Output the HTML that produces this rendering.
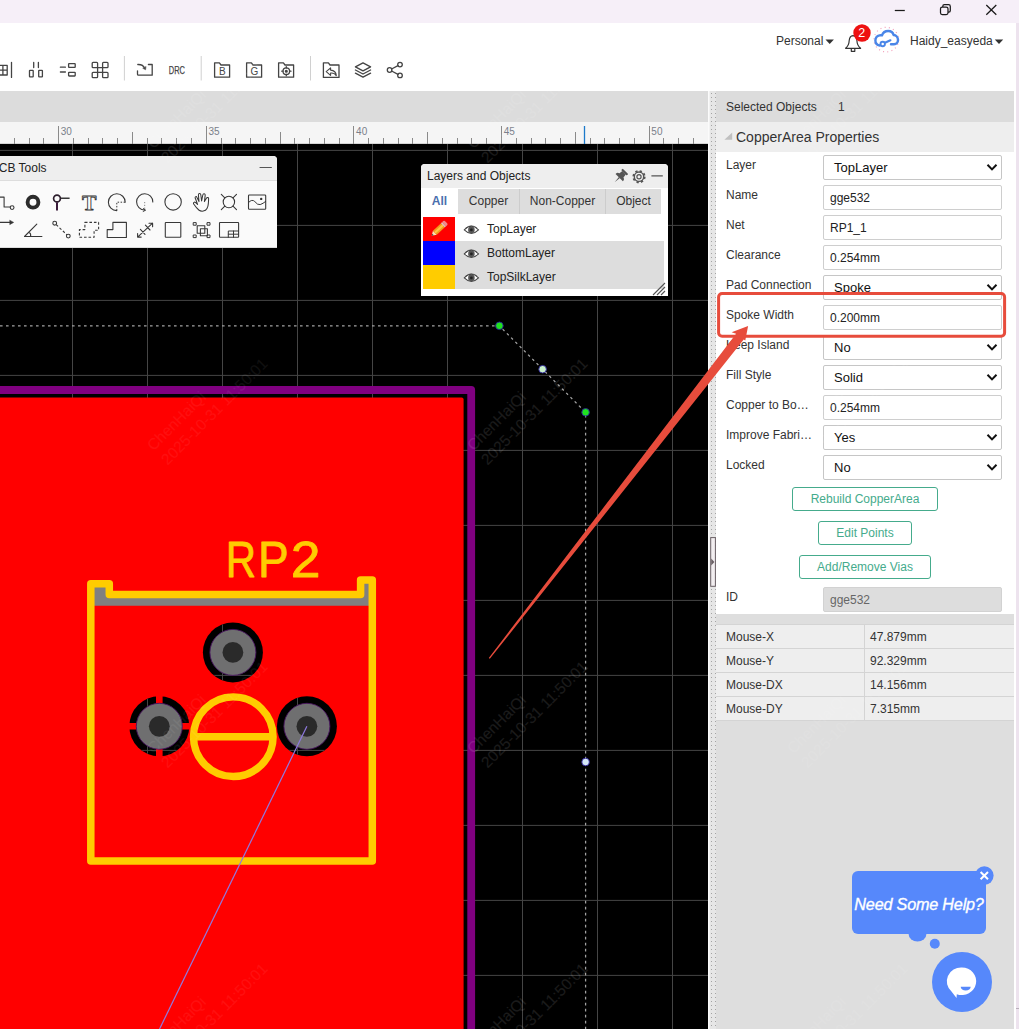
<!DOCTYPE html><html><head><meta charset="utf-8"><title>EasyEDA</title><style>
*{box-sizing:border-box;margin:0;padding:0}
html,body{width:1019px;height:1029px;overflow:hidden;background:#fff}
body{font-family:"Liberation Sans",Arial,sans-serif;font-size:12px;color:#333;position:relative}
.abs{position:absolute}
#titlebar{left:0;top:0;width:1019px;height:23px;background:#f6eff8}
#rightedge{left:1016px;top:23px;width:3px;height:1006px;background:#ede3ee}
#toolbar{left:0;top:23px;width:1016px;height:68px;background:#fff}
#tabbar{left:0;top:91px;width:708px;height:31px;background:#dcdcdc}
#ruler{left:0;top:122px;width:708px;height:22px;background:#f5f5f5;border-bottom:1px solid #d4d4d4}
#canvas{left:0;top:144px;width:708px;height:885px;background:#000;overflow:hidden}
#splitter{left:708px;top:91px;width:9px;height:938px;background:#e6e6e6}
#rpanel{left:716px;top:91px;width:298px;height:938px;background:#dedede}
.lbl{position:absolute;left:10px;white-space:nowrap;color:#333;font-size:12px;line-height:14px}
.inp{position:absolute;left:107px;width:179px;height:25px;border:1px solid #cecece;background:#fff;border-radius:2px;font-size:12px;line-height:24px;padding-left:6px;color:#222;white-space:nowrap}
.sel{font-size:13px;padding-left:10px;color:#111;border-color:#c6c6c6}
.btn{position:absolute;height:24px;border:1px solid #45ab8c;border-radius:3px;color:#45ab8c;font-size:12px;line-height:23px;text-align:center;background:#fff;white-space:nowrap}
.mrow{position:absolute;left:0;width:298px;height:24px;background:#eee;border-top:1px solid #d4d4d4;font-size:12px;line-height:24px;color:#333}
.mrow span{position:absolute;top:0}
.panel{position:absolute;background:#fff;overflow:hidden}
.tab{position:absolute;top:0;height:25px;background:#ddd;text-align:center;font-size:12px;line-height:25px;color:#333;border-right:1px solid #ccc}
.lrow{position:absolute;left:2px;height:24px;width:241px;font-size:12px;line-height:24px;color:#222}
</style></head><body>
<div id="titlebar" class="abs"><svg width="1019" height="23" viewBox="0 0 1019 23" style="position:absolute;left:0;top:0" fill="none" stroke="#1a1a1a" stroke-width="1.25"><path d="M894.8 10.5H904.8"/><rect x="940.5" y="7" width="7.5" height="7.5" rx="1.8"/><path d="M942.8 7V6.3Q942.8 4.7 944.4 4.7H948.6Q950.3 4.7 950.3 6.4V10.6Q950.3 12.2 948.8 12.2H948"/><path d="M986.3 5L996.3 14.8M996.3 5L986.3 14.8"/></svg></div>
<div id="rightedge" class="abs"><div class="abs" style="left:0;top:985px;width:3px;height:1px;background:#b9afbb"></div></div>
<div id="toolbar" class="abs">
<div class="abs" style="left:776px;top:11px;font-size:12px;line-height:14px;color:#333">Personal</div>
<div class="abs" style="left:910px;top:11px;font-size:12px;line-height:14px;color:#333">Haidy_easyeda</div>
<svg class="abs" style="left:0;top:0" width="1016" height="68" viewBox="0 23 1016 68">
<path d="M825.5 39.5h8.4l-4.2 4.4z" fill="#333"/><path d="M994.8 39.5h8.4l-4.2 4.4z" fill="#333"/>
<g fill="none" stroke="#333" stroke-width="1.2" stroke-linejoin="round"><path d="M845.6 48.3Q849 45.5 849.2 40.5Q849.6 35.8 853 35.6Q856.6 35.8 856.9 40.5Q857.1 45.5 860.6 48.3Z"/><path d="M851.3 48.5V51.3H854.8V48.5"/></g>
<circle cx="862" cy="33" r="8.700" fill="#ee1111"/><text x="861.7" y="37.4" font-size="12.5" fill="#fff" text-anchor="middle" font-family="Liberation Sans,Arial,sans-serif">2</text>
<circle cx="886.3" cy="39.600" r="12.300" fill="#fff" stroke="#f08aaa" stroke-width="1.200" stroke-dasharray="1 3.300" opacity="0.800"/>
<path d="M891 44.200H894C896.500 44.200 898 42.300 898 40C898 37.200 896 35.200 893.600 35C893 32.600 890.800 31 888.200 31C885.200 31 882.800 32.800 882 35.400C881 35.200 880.400 35.200 879.600 35.400C877 36 875.400 38 875.400 40.400C875.400 43 877.400 45 879.800 45.500" fill="none" stroke="#4a86e8" stroke-width="2.400" stroke-linecap="round" stroke-linejoin="round"/>
<path d="M884.400 43L890.400 40.300" stroke="#4a86e8" stroke-width="2.200" fill="none" stroke-linecap="round"/><circle cx="882.700" cy="44" r="2.200" fill="#fff" stroke="#4a86e8" stroke-width="1.900"/>
<g fill="none" stroke="#444" stroke-width="1.3" stroke-linejoin="round" stroke-linecap="round">
<path d="M-2 65.300H7.200V75H-2M2.900 65.300V75M-2 70.200H7.200M11.500 62.300V77.400"/>
<path d="M33.700 62.400V67.500M38.400 62.400V67.500"/><rect x="29.500" y="70.300" width="3.700" height="6.600" rx="0.500"/><rect x="38.700" y="70.300" width="3.700" height="6.600" rx="0.500"/>
<path d="M60.400 67.200H65.400M60.400 72H65.400"/><rect x="68.600" y="63.700" width="6.600" height="3.700" rx="0.500"/><rect x="68.600" y="72.300" width="6.600" height="3.700" rx="0.500"/>
<rect x="92.2" y="62.4" width="5.4" height="5.2" rx="0.9"/><rect x="102.6" y="62.4" width="5.4" height="5.200" rx="0.900"/><rect x="92.200" y="72.400" width="5.400" height="5.200" rx="0.900"/><rect x="102.600" y="72.400" width="5.400" height="5.200" rx="0.900"/><rect x="97.600" y="67.600" width="5" height="4.800"/>
<path d="M137.500 70.800V74.200Q137.500 75.200 138.500 75.200H152.200V64.500H148.400M137.800 64.500Q143.200 64.300 144.600 68.400"/><path d="M143 68.400L145.600 69.800L146 66.800Z" fill="#444" stroke-width="0.500"/>
<path d="M214.6 62.8H219.4L221 65H229.6V77.2H214.6Z"/>
<path d="M246.6 62.8H251.4L253 65H261.6V77.2H246.6Z"/>
<path d="M278.6 62.8H283.4L285 65H293.6V77.2H278.6Z"/><circle cx="286.3" cy="71.2" r="3.3"/><circle cx="286.3" cy="71.2" r="0.9" fill="#444"/><path d="M286.3 66.6V68M286.3 74.4V75.8M281.7 71.2H283M289.6 71.2H291"/>
<path d="M323.400 62.800H328.400L330 65H339V77.400H323.400Z"/><path d="M330.600 67.900L326.200 71.600L330.600 75.300V73.100Q334.600 72.800 336.300 75.600Q336 70.400 330.600 70.100Z" stroke-width="1.100"/>
<path d="M363 62.8L370.6 66.8L363 70.8L355.4 66.8Z"/><path d="M355.4 70L363 74L370.6 70M355.4 73.2L363 77.2L370.6 73.2"/>
<circle cx="389.6" cy="70" r="2.3"/><circle cx="400" cy="64.6" r="2.3"/><circle cx="400" cy="75.4" r="2.3"/><path d="M391.6 69L398 65.6M391.6 71L398 74.4"/>
</g>
<text x="222.4" y="75" font-size="10" fill="#444" text-anchor="middle" font-family="Liberation Sans,Arial,sans-serif">B</text>
<text x="254.4" y="75" font-size="10" fill="#444" text-anchor="middle" font-family="Liberation Sans,Arial,sans-serif">G</text>
<text x="168.800" y="73.900" font-size="11" fill="#444" stroke="#444" stroke-width="0.250" font-family="Liberation Sans,Arial,sans-serif" textLength="16.200" lengthAdjust="spacingAndGlyphs">DRC</text>
<path d="M124.4 56V80.5" stroke="#d0d0d0" stroke-width="1"/>
<path d="M201.2 56V80.5" stroke="#d0d0d0" stroke-width="1"/>
<path d="M310.5 56V80.5" stroke="#d0d0d0" stroke-width="1"/>
</svg></div>
<div id="tabbar" class="abs"></div>
<div id="ruler" class="abs"><svg width="708" height="22" viewBox="0 122 708 22" style="position:absolute;left:0;top:0">
<path d="M14.5 138.4V143.5M29.5 138.4V143.5M43.5 138.4V143.5M58.5 126V143.5M73.5 138.4V143.5M88.5 138.4V143.5M102.5 138.4V143.5M117.5 138.4V143.5M132.5 132V143.5M147.5 138.4V143.5M161.5 138.4V143.5M176.5 138.4V143.5M191.5 138.4V143.5M206.5 126V143.5M221.5 138.4V143.5M235.5 138.4V143.5M250.5 138.4V143.5M265.5 138.4V143.5M280.5 132V143.5M294.5 138.4V143.5M309.5 138.4V143.5M324.5 138.4V143.5M339.5 138.4V143.5M353.5 126V143.5M368.5 138.4V143.5M383.5 138.4V143.5M398.5 138.4V143.5M412.5 138.4V143.5M427.5 132V143.5M442.5 138.4V143.5M457.5 138.4V143.5M471.5 138.4V143.5M486.5 138.4V143.5M501.5 126V143.5M516.5 138.4V143.5M531.5 138.4V143.5M545.5 138.4V143.5M560.5 138.4V143.5M575.5 132V143.5M590.5 138.4V143.5M604.5 138.4V143.5M619.5 138.4V143.5M634.5 138.4V143.5M649.5 126V143.5M663.5 138.4V143.5M678.5 138.4V143.5M693.5 138.4V143.5" stroke="#8a8a8a" stroke-width="1" fill="none" shape-rendering="crispEdges"/>
<text x="60.8" y="135" font-size="10" fill="#7a7f8a" font-family="Liberation Sans,Arial,sans-serif">30</text>
<text x="208.44" y="135" font-size="10" fill="#7a7f8a" font-family="Liberation Sans,Arial,sans-serif">35</text>
<text x="356.08" y="135" font-size="10" fill="#7a7f8a" font-family="Liberation Sans,Arial,sans-serif">40</text>
<text x="503.71" y="135" font-size="10" fill="#7a7f8a" font-family="Liberation Sans,Arial,sans-serif">45</text>
<text x="651.35" y="135" font-size="10" fill="#7a7f8a" font-family="Liberation Sans,Arial,sans-serif">50</text>
<path d="M584.5 126V144" stroke="#1c7acb" stroke-width="1.3"/>
</svg></div>
<div id="canvas" class="abs"><svg width="708" height="885" viewBox="0 144 708 885" style="position:absolute;left:0;top:0">
<path d="M72.5 143V1029M147.5 143V1029M222.5 143V1029M297.5 143V1029M372.5 143V1029M447.5 143V1029M522.5 143V1029M597.5 143V1029M672.5 143V1029M0 150.4H708M0 225.4H708M0 300.4H708M0 375.4H708M0 450.4H708M0 525.4H708M0 600.4H708M0 675.4H708M0 750.4H708M0 825.4H708M0 900.4H708M0 975.4H708" stroke="#454545" stroke-width="1" fill="none"/>
<path d="M-10 390H471.2V1040" fill="none" stroke="#800080" stroke-width="7.8" stroke-linejoin="round"/>
<path d="M-10 397.5H461.6Q463.6 397.5 463.6 399.5V1040H-10Z" fill="#ff0000"/>
<circle cx="232.9" cy="652.4" r="30" fill="#000"/>
<circle cx="159.3" cy="726.3" r="30" fill="#000"/>
<circle cx="306.9" cy="726.3" r="30" fill="#000"/>
<clipPath id="padclip"><circle cx="232.9" cy="652.4" r="30"/><circle cx="159.3" cy="726.3" r="30"/><circle cx="306.9" cy="726.3" r="30"/></clipPath>
<g clip-path="url(#padclip)"><path d="M72.5 143V1029M147.5 143V1029M222.5 143V1029M297.5 143V1029M372.5 143V1029M447.5 143V1029M522.5 143V1029M597.5 143V1029M672.5 143V1029M0 150.4H708M0 225.4H708M0 300.4H708M0 375.4H708M0 450.4H708M0 525.4H708M0 600.4H708M0 675.4H708M0 750.4H708M0 825.4H708M0 900.4H708M0 975.4H708" stroke="#454545" stroke-width="1" fill="none"/></g>
<path d="M159.3 694V759M127 726.3H191" stroke="#ff0000" stroke-width="6.6" fill="none"/>
<circle cx="232.9" cy="652.4" r="23" fill="#6f6f70" stroke="#4a1460" stroke-width="0.9"/>
<circle cx="232.9" cy="652.4" r="10.4" fill="#2a2a2a"/>
<circle cx="159.3" cy="726.3" r="23" fill="#6f6f70" stroke="#4a1460" stroke-width="0.9"/>
<circle cx="159.3" cy="726.3" r="10.4" fill="#2a2a2a"/>
<circle cx="306.9" cy="726.3" r="23" fill="#6f6f70" stroke="#4a1460" stroke-width="0.9"/>
<circle cx="306.9" cy="726.3" r="10.4" fill="#2a2a2a"/>
<path d="M90.8 583.7H109.3V594.5H360.6V580H372.3V605.8H90.8Z" fill="#808080"/>
<path d="M90.8 861V583.7H109.3V594.5H360.6V580H372.3V861Z" fill="none" stroke="#ffcc00" stroke-width="7.5" stroke-linejoin="round"/>
<circle cx="233.3" cy="736.7" r="39.8" fill="none" stroke="#ffcc00" stroke-width="7.4"/><path d="M194 736.7H273" stroke="#ffcc00" stroke-width="7.4"/>
<text transform="translate(241 576.9) scale(0.84 1)" x="0" y="0" font-size="50" text-anchor="middle" fill="#ffcc00" stroke="#ffcc00" stroke-width="0.8" stroke-linejoin="round" font-family="Liberation Sans,Arial,sans-serif">R</text>
<text transform="translate(273.3 576.9) scale(0.92 1)" x="0" y="0" font-size="50" text-anchor="middle" fill="#ffcc00" stroke="#ffcc00" stroke-width="0.8" stroke-linejoin="round" font-family="Liberation Sans,Arial,sans-serif">P</text>
<text transform="translate(305.6 576.9) scale(1.07 1)" x="0" y="0" font-size="50" text-anchor="middle" fill="#ffcc00" stroke="#ffcc00" stroke-width="0.8" stroke-linejoin="round" font-family="Liberation Sans,Arial,sans-serif">2</text>
<path d="M306.900 726.300L159.300 1029.500" stroke="#8f7ae0" stroke-width="1.200" fill="none"/>
<path d="M0 325.900H499.400L585.600 412.300V1029" stroke="#a2a2a2" stroke-width="1.250" stroke-dasharray="2.600 3.400" fill="none"/>
<circle cx="499.4" cy="325.8" r="3.8" fill="#1fe21f" stroke="#2a1f9a" stroke-width="0.9"/>
<circle cx="585.6" cy="412.3" r="3.8" fill="#1fe21f" stroke="#2a1f9a" stroke-width="0.9"/>
<circle cx="542.6" cy="369.2" r="3.8" fill="#c8f0cc" stroke="#2a1f9a" stroke-width="0.9"/>
<circle cx="585.6" cy="762" r="3.8" fill="#d6e8f6" stroke="#2a1f9a" stroke-width="0.9"/>
</svg>
</div>
<div class="panel" style="left:-6px;top:156px;width:283px;height:92px;border-radius:0 4px 0 0;background:#fafafa;border-bottom:1px solid #ddd">
<div class="abs" style="left:0;top:0;width:283px;height:25px;background:#eee;border-bottom:1px solid #ddd"></div>
<div class="abs" style="left:-3.200px;top:5px;font-size:12px;line-height:14px;color:#222;white-space:nowrap">PCB Tools</div>
<svg class="abs" style="left:6px;top:0" width="277" height="92" viewBox="0 156 277 92" fill="none" stroke="#383838" stroke-width="1.1" stroke-linejoin="round" stroke-linecap="round">
<path d="M260 167.5H271.4" stroke="#555"/>
<path d="M-3 197.1H4.1V207H10.2"/><circle cx="12.1" cy="207.6" r="1.9"/>
<circle cx="33" cy="202.2" r="5.4" stroke="#2b2b2b" stroke-width="3.9"/>
<circle cx="57" cy="198.5" r="3.4" stroke="#2e1f2e" stroke-width="1.7"/><path d="M57 202.3V210.4" stroke="#3a1a3a" stroke-width="2" stroke-linecap="butt"/><path d="M61 198.3H69.6" stroke-width="1.6" stroke-linecap="butt"/>
<text x="89.200" y="209.700" font-size="20.500" font-weight="bold" font-family="Liberation Serif,serif" text-anchor="middle" fill="#fafafa" stroke="#333" stroke-width="0.800" textLength="14.500" lengthAdjust="spacingAndGlyphs">T</text>
<path d="M125.2 202.2A8.4 8.4 0 1 0 116.8 210.6"/><path d="M116.8 210.4V202.2H125" stroke-dasharray="1.5 1.5" stroke-width="1" stroke-linecap="butt"/>
<path d="M152.8 202A8.1 8.1 0 1 0 144.7 210"/><path d="M144.7 202V209.6" stroke-dasharray="1.2 1.6" stroke-width="1" stroke="#888" stroke-linecap="butt"/><path d="M143.4 208.600L145.600 210.200L143.200 211.400" stroke-width="1"/>
<circle cx="173.1" cy="201.9" r="8.2"/>
<path d="M193.500 203.800C193.200 202.400 194.400 201.800 195.400 202.400L197.600 204.400L195.200 198C194.800 196.600 196.400 196 197 197.400L199 201.600L198.400 195C198.400 193.200 200.600 193 200.800 194.800L201.600 201L202.800 195C203.200 193.200 205.400 193.600 205.200 195.400L204.400 201.600L206.400 198.200C207.200 196.800 209 197.600 208.600 199.200C208.400 203 208.600 206 207 208.400C205.400 211.400 201.400 212 198.800 210C196.600 208.200 195 206 193.500 203.800Z" stroke-width="1.050"/>
<circle cx="228.900" cy="202" r="5.700"/><path d="M221.300 194.400L224.800 197.900M236.500 194.400L233 197.900M221.300 209.600L224.800 206.100M236.500 209.600L233 206.100"/>
<rect x="248.5" y="195" width="17.2" height="14.3" rx="0.8"/><path d="M248.500 202.600Q252 198.600 254.800 201.600Q257.600 205.200 260.200 204.600Q263 203.600 265.700 201.400" stroke-width="1"/><circle cx="261.200" cy="198.900" r="1.200" fill="#333" stroke="none"/>
<path d="M-3 222.4H11.500" stroke-linecap="butt"/><path d="M10 220.400L13.600 222.400L10 224.400Z" fill="#333" stroke-width="0.600"/>
<path d="M41.900 236.500H24.500L36.800 224.200M30.600 236.500Q31.200 233.200 28.800 232.200" stroke-width="1.100"/>
<circle cx="54.700" cy="223.200" r="1.900"/><circle cx="68.300" cy="236.100" r="1.900"/><path d="M56.200 224.600L66.900 234.800" stroke-dasharray="2.600 2" stroke-linecap="butt"/>
<path d="M84.900 222.400H98.600V230.300H94.100V237.200H79.400V229.600H84.900Z" stroke-dasharray="2.600 1.900" stroke-width="1.100" stroke-linecap="butt"/>
<path d="M107.200 237.500V229.600H112.900V222.400H126.400V237.500Z"/>
<path d="M137.600 237.100L152.600 223.200M137.600 237.100V233.600M137.600 237.100H141.200M152.600 223.200V226.800M152.600 223.200H149M140.400 229.400L145 234.400M145.400 225.200L150 230" stroke-width="1.100"/>
<rect x="165.300" y="222.500" width="15.500" height="14.800" rx="0.600"/>
<rect x="197.200" y="225.800" width="7.600" height="7.400"/><rect x="200.400" y="228.800" width="7" height="7" stroke-width="1.100"/><g stroke-width="1"><rect x="193.600" y="222.600" width="2.600" height="2.600"/><rect x="207.400" y="222.600" width="2.600" height="2.600"/><rect x="193.600" y="235" width="2.600" height="2.600"/><rect x="207.400" y="235" width="2.600" height="2.600"/></g>
<rect x="219.500" y="222.500" width="19.100" height="14.800" rx="0.600"/><path d="M228.300 237.300V231H238.600M233.500 231V237.300M228.300 234.200H238.600" stroke-width="1"/>
</svg></div>
<div class="panel" style="left:421px;top:164px;width:247px;height:132px;border-radius:4px 4px 0 0;background:#fff">
<div class="abs" style="left:0;top:0;width:247px;height:24px;background:#eee"></div>
<div class="abs" style="left:6px;top:5px;font-size:12px;line-height:14px;color:#222;white-space:nowrap">Layers and Objects</div>
<svg class="abs" style="left:0;top:0" width="247" height="24" viewBox="421 164 247 24">
<g transform="translate(620.6 176.200) rotate(45) scale(1.150)" fill="#555"><rect x="-3.400" y="-6" width="6.800" height="1.900" rx="0.700"/><path d="M-2.100 -4.300H2.100L2.600 -0.400H-2.600Z"/><path d="M-4.500 1.700Q-4.500 -0.900 -2.400 -0.900H2.400Q4.500 -0.900 4.500 1.700Z"/><path d="M-0.600 1.500H0.600L0 7.400Z"/></g>
<g fill="none" stroke="#555" stroke-width="1.4"><circle cx="639" cy="176.7" r="4.7"/><circle cx="639" cy="176.7" r="2.1" stroke-width="1.2"/><circle cx="639" cy="176.7" r="5.6" stroke-width="2" stroke-dasharray="2.2 2.2"/></g>
<path d="M651.4 175.8H662.8" stroke="#555" stroke-width="1.3"/>
</svg>
<div class="abs" style="left:0;top:25px;width:247px;height:25px">
<div class="tab" style="left:0;width:37px;background:#fff;color:#3d6cb4;font-weight:bold;font-size:12px;border-right:none;color:#4a6fad">All</div>
<div class="tab" style="left:37px;width:62px">Copper</div>
<div class="tab" style="left:99px;width:86px">Non-Copper</div>
<div class="tab" style="left:185px;width:55px;border-right:none">Object</div>
</div>
<div class="lrow" style="top:53px;background:#fff"><div class="abs" style="left:0;top:0;width:32px;height:24px;background:#ff0000"></div>
<svg class="abs" style="left:40px;top:6.500px" width="16.800" height="11.760" viewBox="0 0 20 14"><path d="M1.5 7Q10 -1.5 18.5 7Q10 15.5 1.5 7Z" fill="#fff" stroke="#444" stroke-width="1.2"/><circle cx="10" cy="7" r="3.9" fill="#555"/><circle cx="10" cy="7" r="1.6" fill="#222"/><path d="M3 5Q10 -0.5 17 5" fill="none" stroke="#444" stroke-width="1"/></svg>
<span class="abs" style="left:64px;top:0;white-space:nowrap">TopLayer</span></div>
<div class="lrow" style="top:77px;background:#ddd"><div class="abs" style="left:0;top:0;width:32px;height:24px;background:#0000ff"></div>
<svg class="abs" style="left:40px;top:6.500px" width="16.800" height="11.760" viewBox="0 0 20 14"><path d="M1.5 7Q10 -1.5 18.5 7Q10 15.5 1.5 7Z" fill="#fff" stroke="#444" stroke-width="1.2"/><circle cx="10" cy="7" r="3.9" fill="#555"/><circle cx="10" cy="7" r="1.6" fill="#222"/><path d="M3 5Q10 -0.5 17 5" fill="none" stroke="#444" stroke-width="1"/></svg>
<span class="abs" style="left:64px;top:0;white-space:nowrap">BottomLayer</span></div>
<div class="lrow" style="top:101px;background:#ddd"><div class="abs" style="left:0;top:0;width:32px;height:24px;background:#ffcc00"></div>
<svg class="abs" style="left:40px;top:6.500px" width="16.800" height="11.760" viewBox="0 0 20 14"><path d="M1.5 7Q10 -1.5 18.5 7Q10 15.5 1.5 7Z" fill="#fff" stroke="#444" stroke-width="1.2"/><circle cx="10" cy="7" r="3.9" fill="#555"/><circle cx="10" cy="7" r="1.6" fill="#222"/><path d="M3 5Q10 -0.5 17 5" fill="none" stroke="#444" stroke-width="1"/></svg>
<span class="abs" style="left:64px;top:0;white-space:nowrap">TopSilkLayer</span></div>
<svg class="abs" style="left:6px;top:54px" width="24" height="22" viewBox="427 218 24 22"><g transform="translate(438.900 229) rotate(-43)"><path d="M-9.900 0L-5.500 -2.800V2.800Z" fill="#fbe3b8"/><path d="M-9.900 0L-8.100 -1.150V1.150Z" fill="#3a3a3a"/><rect x="-5.500" y="-2.800" width="11" height="5.600" fill="#f29a1c"/><rect x="-5.500" y="-1" width="11" height="2" fill="#ffc347"/><rect x="5.500" y="-2.800" width="1.300" height="5.600" fill="#d8d8d8"/><path d="M6.800 -2.800H8.600Q9.900 -2.800 9.900 -1.500V1.500Q9.900 2.800 8.600 2.800H6.800Z" fill="#f08a8a"/></g></svg>
<svg class="abs" style="left:231px;top:118px" width="14" height="14" viewBox="0 0 14 14"><path d="M1 13L13 1M5 13L13 5M9 13L13 9" stroke="#555" stroke-width="1.1"/></svg>
</div>
<div id="splitter" class="abs"><svg width="9" height="938" viewBox="0 0 9 938" style="position:absolute;left:0;top:0"><rect x="0" y="0" width="1.600" height="938" fill="#fbfbfb"/><path d="M3.500 2V938M7.500 2V938" stroke="#a4a4a4" stroke-width="1" stroke-dasharray="1 3"/><rect x="2.700" y="446.600" width="4.700" height="48.700" fill="#f2eef0" stroke="#6a6065" stroke-width="1"/><path d="M3.200 467.500L6.400 471L3.200 474.500Z" fill="#6a6065"/></svg></div>
<div id="rpanel" class="abs">
<div class="abs" style="left:0;top:0;width:298px;height:31px;background:#dcdcdc"></div>
<div class="abs" style="left:10px;top:9px;font-size:12px;line-height:14px;color:#333;white-space:nowrap">Selected Objects</div><div class="abs" style="left:122px;top:9px;font-size:12px;line-height:14px;color:#333">1</div>
<div class="abs" style="left:0;top:31px;width:298px;height:30px;background:#eeeeee"></div>
<svg class="abs" style="left:7px;top:40px" width="10" height="10" viewBox="0 0 10 10"><path d="M9.200 1.400V8.800H1.400Z" fill="#c0c0c0"/></svg>
<div class="abs" style="left:20px;top:38px;font-size:14px;line-height:17px;color:#333;white-space:nowrap">CopperArea Properties</div>
<div class="abs" style="left:0;top:61px;width:298px;height:462px;background:#fff"></div>
<div class="lbl" style="top:67px">Layer</div>
<div class="inp sel" style="top:64px">TopLayer<svg style="position:absolute;right:3px;top:7px" width="12" height="9" viewBox="0 0 12 9"><path d="M1.500 1.800L6 6.400L10.500 1.800" fill="none" stroke="#111" stroke-width="2"/></svg></div>
<div class="lbl" style="top:97px">Name</div>
<div class="inp" style="top:94px">gge532</div>
<div class="lbl" style="top:127px">Net</div>
<div class="inp" style="top:124px">RP1_1</div>
<div class="lbl" style="top:157px">Clearance</div>
<div class="inp" style="top:154px">0.254mm</div>
<div class="lbl" style="top:187px">Pad Connection</div>
<div class="inp sel" style="top:184px">Spoke<svg style="position:absolute;right:3px;top:7px" width="12" height="9" viewBox="0 0 12 9"><path d="M1.500 1.800L6 6.400L10.500 1.800" fill="none" stroke="#111" stroke-width="2"/></svg></div>
<div class="lbl" style="top:217px">Spoke Width</div>
<div class="inp" style="top:214px">0.200mm</div>
<div class="lbl" style="top:247px">Keep Island</div>
<div class="inp sel" style="top:244px">No<svg style="position:absolute;right:3px;top:7px" width="12" height="9" viewBox="0 0 12 9"><path d="M1.500 1.800L6 6.400L10.500 1.800" fill="none" stroke="#111" stroke-width="2"/></svg></div>
<div class="lbl" style="top:277px">Fill Style</div>
<div class="inp sel" style="top:274px">Solid<svg style="position:absolute;right:3px;top:7px" width="12" height="9" viewBox="0 0 12 9"><path d="M1.500 1.800L6 6.400L10.500 1.800" fill="none" stroke="#111" stroke-width="2"/></svg></div>
<div class="lbl" style="top:307px">Copper to Bo…</div>
<div class="inp" style="top:304px">0.254mm</div>
<div class="lbl" style="top:337px">Improve Fabri…</div>
<div class="inp sel" style="top:334px">Yes<svg style="position:absolute;right:3px;top:7px" width="12" height="9" viewBox="0 0 12 9"><path d="M1.500 1.800L6 6.400L10.500 1.800" fill="none" stroke="#111" stroke-width="2"/></svg></div>
<div class="lbl" style="top:367px">Locked</div>
<div class="inp sel" style="top:364px">No<svg style="position:absolute;right:3px;top:7px" width="12" height="9" viewBox="0 0 12 9"><path d="M1.500 1.800L6 6.400L10.500 1.800" fill="none" stroke="#111" stroke-width="2"/></svg></div>
<div class="btn" style="left:76px;top:396px;width:146px">Rebuild CopperArea</div>
<div class="btn" style="left:102px;top:430px;width:94px">Edit Points</div>
<div class="btn" style="left:83px;top:464px;width:132px">Add/Remove Vias</div>
<div class="lbl" style="top:499px">ID</div>
<div class="inp" style="top:496px;background:#ddd;border-color:#d2d2d2;color:#666">gge532</div>
<div class="mrow" style="top:533px"><span style="left:10px">Mouse-X</span><span style="left:148px;width:1px;height:24px;background:#d4d4d4"></span><span style="left:154px">47.879mm</span></div>
<div class="mrow" style="top:557px"><span style="left:10px">Mouse-Y</span><span style="left:148px;width:1px;height:24px;background:#d4d4d4"></span><span style="left:154px">92.329mm</span></div>
<div class="mrow" style="top:581px"><span style="left:10px">Mouse-DX</span><span style="left:148px;width:1px;height:24px;background:#d4d4d4"></span><span style="left:154px">14.156mm</span></div>
<div class="mrow" style="top:605px"><span style="left:10px">Mouse-DY</span><span style="left:148px;width:1px;height:24px;background:#d4d4d4"></span><span style="left:154px">7.315mm</span></div>
<div class="abs" style="left:0;top:629px;width:298px;height:1px;background:#d4d4d4"></div>
</div>
<svg class="abs" style="left:0;top:0;pointer-events:none" width="1019" height="1029" viewBox="0 0 1019 1029">
<rect x="718.6" y="293.5" width="286" height="42.800" rx="3.500" fill="none" stroke="#e74c3c" stroke-width="3"/>
<path d="M488.800 658L736.100 333.700L731.600 332.300L748.100 326.100L745.300 340.600L743.700 339.500L489.800 658.800Z" fill="#e74c3c"/>
<g transform="translate(152 151) rotate(-45)" fill="#fff" opacity="0.1" font-size="15.500" font-family="Liberation Sans,Arial,sans-serif"><text x="2" y="0">ChenHaiQi</text><text x="2" y="20">2025-10-31 11:50:01</text></g>
<g transform="translate(152 453) rotate(-45)" fill="#fff" opacity="0.06" font-size="15.500" font-family="Liberation Sans,Arial,sans-serif"><text x="2" y="0">ChenHaiQi</text><text x="2" y="20">2025-10-31 11:50:01</text></g>
<g transform="translate(152 756) rotate(-45)" fill="#fff" opacity="0.06" font-size="15.500" font-family="Liberation Sans,Arial,sans-serif"><text x="2" y="0">ChenHaiQi</text><text x="2" y="20">2025-10-31 11:50:01</text></g>
<g transform="translate(152 1058) rotate(-45)" fill="#fff" opacity="0.06" font-size="15.500" font-family="Liberation Sans,Arial,sans-serif"><text x="2" y="0">ChenHaiQi</text><text x="2" y="20">2025-10-31 11:50:01</text></g>
<g transform="translate(472 151) rotate(-45)" fill="#fff" opacity="0.1" font-size="15.500" font-family="Liberation Sans,Arial,sans-serif"><text x="2" y="0">ChenHaiQi</text><text x="2" y="20">2025-10-31 11:50:01</text></g>
<g transform="translate(472 453) rotate(-45)" fill="#fff" opacity="0.1" font-size="15.500" font-family="Liberation Sans,Arial,sans-serif"><text x="2" y="0">ChenHaiQi</text><text x="2" y="20">2025-10-31 11:50:01</text></g>
<g transform="translate(472 756) rotate(-45)" fill="#fff" opacity="0.1" font-size="15.500" font-family="Liberation Sans,Arial,sans-serif"><text x="2" y="0">ChenHaiQi</text><text x="2" y="20">2025-10-31 11:50:01</text></g>
<g transform="translate(472 1058) rotate(-45)" fill="#fff" opacity="0.1" font-size="15.500" font-family="Liberation Sans,Arial,sans-serif"><text x="2" y="0">ChenHaiQi</text><text x="2" y="20">2025-10-31 11:50:01</text></g>
<g transform="translate(792 151) rotate(-45)" fill="#fff" opacity="0.085" font-size="15.500" font-family="Liberation Sans,Arial,sans-serif"><text x="2" y="0">ChenHaiQi</text><text x="2" y="20">2025-10-31 11:50:01</text></g>
<g transform="translate(792 453) rotate(-45)" fill="#fff" opacity="0.085" font-size="15.500" font-family="Liberation Sans,Arial,sans-serif"><text x="2" y="0">ChenHaiQi</text><text x="2" y="20">2025-10-31 11:50:01</text></g>
<g transform="translate(792 756) rotate(-45)" fill="#fff" opacity="0.085" font-size="15.500" font-family="Liberation Sans,Arial,sans-serif"><text x="2" y="0">ChenHaiQi</text><text x="2" y="20">2025-10-31 11:50:01</text></g>
<g transform="translate(792 1058) rotate(-45)" fill="#fff" opacity="0.085" font-size="15.500" font-family="Liberation Sans,Arial,sans-serif"><text x="2" y="0">ChenHaiQi</text><text x="2" y="20">2025-10-31 11:50:01</text></g>
</svg>
<div class="abs" style="left:852px;top:871px;width:134px;height:63px;background:#5688fb;border-radius:6px"></div>
<div class="abs" style="left:852px;top:871px;width:134px;height:63px;line-height:62px;text-align:center;color:#fff;font-style:italic;font-size:16.200px;-webkit-text-stroke:0.350px #fff;padding-top:2px;font-family:'Liberation Sans',Arial,sans-serif;white-space:nowrap;letter-spacing:-0.200px">Need Some Help?</div>
<svg class="abs" style="left:840px;top:860px" width="170" height="160" viewBox="840 860 170 160">
<circle cx="984.300" cy="875.600" r="9.300" fill="#5688fb"/><path d="M980.600 872L988 879.300M988 872L980.600 879.300" stroke="#fff" stroke-width="2"/>
<path d="M908.500 933.500A9 8 0 0 0 926.500 933.500Z" fill="#5688fb"/><circle cx="934.800" cy="943.800" r="5" fill="#5688fb"/>
<circle cx="962" cy="982" r="30" fill="#5688fb"/>
<path d="M962 967.500A14.300 13.800 0 1 1 956.800 994.200L956.500 998L951.500 991.500A14.300 13.800 0 0 1 962 967.500Z" fill="#fff"/><path d="M960.700 986.800H970.700A5 3.800 0 0 1 960.700 986.800Z" fill="#5688fb"/>
</svg>
</body></html>
